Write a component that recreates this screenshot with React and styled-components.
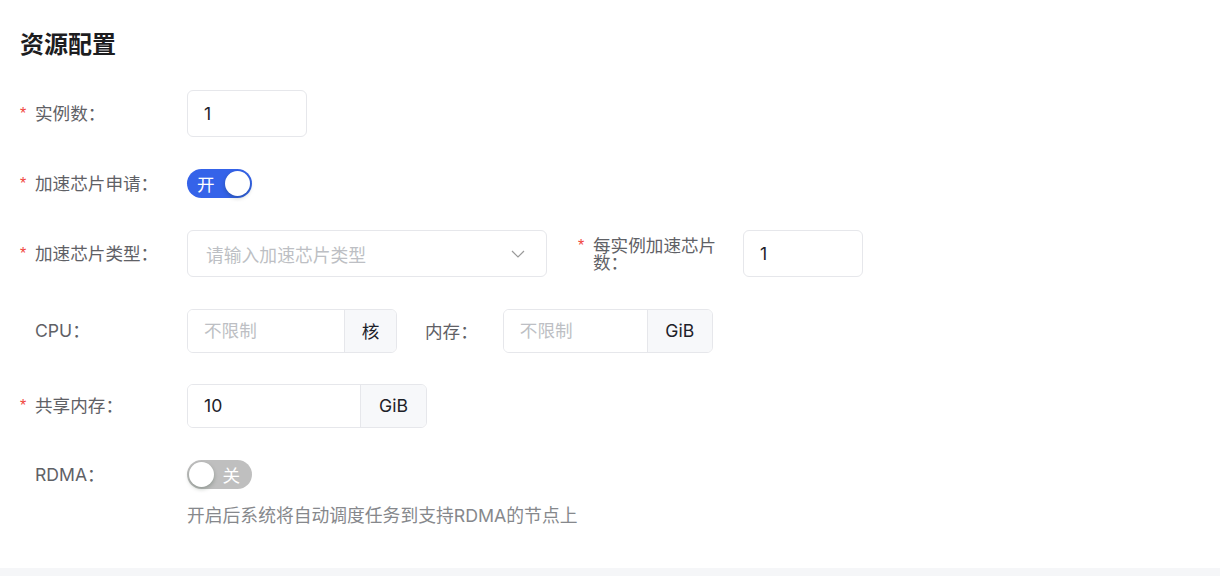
import styled, { createGlobalStyle } from "styled-components";

const GlobalStyle = createGlobalStyle`
  body {
    margin: 0;
    background: #f5f6f8;
    font-family: Inter, "Noto Sans CJK SC", sans-serif;
  }
`;

const Chevron = () => (
  <svg width="14" height="8" viewBox="0 0 14 8" fill="none">
    <path d="M1 1l6 6 6-6" stroke="#9a9a9a" strokeWidth="1.2" />
  </svg>
);

const App = () => {
  return (
    <>
      <GlobalStyle />
      <Card>
        <Title>资源配置</Title>
        <Form>
          <Row>
            <Label required>实例数：</Label>
            <Input $w={120} defaultValue="1" />
          </Row>
          <Row $gap={23}>
            <Label required>加速芯片申请：</Label>
            <Switch $on>
              <SwitchText $on>开</SwitchText>
              <Knob />
            </Switch>
          </Row>
          <Row $gap={23}>
            <Label required>加速芯片类型：</Label>
            <Select>
              <Placeholder>请输入加速芯片类型</Placeholder>
              <Chevron />
            </Select>
            <Item>
              <Label required $w={147}>每实例加速芯片数：</Label>
              <Input $w={120} defaultValue="1" />
            </Item>
          </Row>
          <Row $gap={30}>
            <Label>CPU：</Label>
            <Group $w={210}>
              <GroupInput placeholder="不限制" />
              <Addon $w={51}>核</Addon>
            </Group>
            <InlineLabel>内存：</InlineLabel>
            <Group $w={210}>
              <GroupInput placeholder="不限制" />
              <Addon $w={64}>GiB</Addon>
            </Group>
          </Row>
          <Row $gap={28}>
            <Label required>共享内存：</Label>
            <Group $w={240}>
              <GroupInput defaultValue="10" />
              <Addon $w={65}>GiB</Addon>
            </Group>
          </Row>
          <Row $gap={22}>
            <Label>RDMA：</Label>
            <Switch>
              <Knob />
              <SwitchText>关</SwitchText>
            </Switch>
          </Row>
          <Help>开启后系统将自动调度任务到支持RDMA的节点上</Help>
        </Form>
      </Card>
    </>
  );
};
export default App;

const Label = ({ required, children, $w }) => (
  <LabelBox $w={$w}>
    <Star>{required ? "*" : ""}</Star>
    <LabelText>{children}</LabelText>
  </LabelBox>
);

const Card = styled.div`
  background: #ffffff;
  height: 568px;
  box-sizing: border-box;
  padding: 27px 20px 0;
`;
const Title = styled.h2`
  margin: 0;
  font-family: "Noto Sans CJK SC", sans-serif;
  font-size: 24px;
  line-height: 32px;
  font-weight: 700;
  color: #1d1d1f;
`;
const Form = styled.div`
  margin-top: 31px;
  display: flex;
  flex-direction: column;
`;
const Row = styled.div`
  display: flex;
  align-items: center;
  height: 47px;
  margin-top: ${(p) => p.$gap || 0}px;
`;
const Item = styled.div`
  display: flex;
  align-items: center;
  margin-left: 31px;
`;
const LabelBox = styled.div`
  display: flex;
  align-items: flex-start;
  width: ${(p) => p.$w || 149}px;
  margin-right: 18px;
  flex-shrink: 0;
  font-size: 17.6px;
  line-height: 17px;
`;
const Star = styled.span`
  width: 15px;
  flex-shrink: 0;
  color: #f0443a;
  font-family: "Liberation Sans", sans-serif;
  font-size: 16px;
`;
const LabelText = styled.span`
  color: #5f6166;
`;
const InlineLabel = styled.span`
  margin: 0 25px 0 28px;
  font-size: 17.6px;
  color: #5f6166;
`;
const Input = styled.input`
  box-sizing: border-box;
  width: ${(p) => p.$w}px;
  height: 47px;
  border: 1px solid #e6e7eb;
  border-radius: 6px;
  padding: 0 16px;
  font-family: inherit;
  font-size: 17.6px;
  color: #1d2129;
  outline: none;
`;
const Select = styled.div`
  box-sizing: border-box;
  width: 360px;
  height: 47px;
  border: 1px solid #e6e7eb;
  border-radius: 6px;
  padding: 0 21px 0 18px;
  display: flex;
  align-items: center;
  justify-content: space-between;
`;
const Placeholder = styled.span`
  font-size: 17.8px;
  color: #bdbfc4;
`;
const Group = styled.div`
  box-sizing: border-box;
  width: ${(p) => p.$w}px;
  height: 44px;
  display: flex;
  border: 1px solid #e6e7eb;
  border-radius: 6px;
  overflow: hidden;
`;
const GroupInput = styled.input`
  flex: 1;
  min-width: 0;
  border: none;
  padding: 0 16px;
  font-family: inherit;
  font-size: 17.6px;
  color: #1d2129;
  outline: none;
  &::placeholder {
    color: #bdbfc4;
  }
`;
const Addon = styled.div`
  width: ${(p) => p.$w}px;
  flex-shrink: 0;
  display: flex;
  align-items: center;
  justify-content: center;
  background: #f7f8fa;
  border-left: 1px solid #e6e7eb;
  font-size: 17.6px;
  color: #1d2129;
`;
const Switch = styled.div`
  box-sizing: border-box;
  width: 65px;
  height: 29px;
  border-radius: 15px;
  padding: 0 2px;
  display: flex;
  align-items: center;
  justify-content: space-between;
  background: ${(p) => (p.$on ? "#3563e9" : "#bfbfbf")};
`;
const Knob = styled.span`
  width: 25px;
  height: 25px;
  border-radius: 50%;
  background: #ffffff;
  box-shadow: 0 2px 4px rgba(0, 35, 11, 0.25);
`;
const SwitchText = styled.span`
  color: #ffffff;
  font-family: "Noto Sans CJK SC", sans-serif;
  font-size: 17.6px;
  line-height: 1;
  margin: ${(p) => (p.$on ? "0 0 0 8px" : "0 10px 0 0")};
`;
const Help = styled.div`
  margin: 6px 0 0 167px;
  font-size: 17.8px;
  line-height: 24px;
  color: #86888c;
`;
